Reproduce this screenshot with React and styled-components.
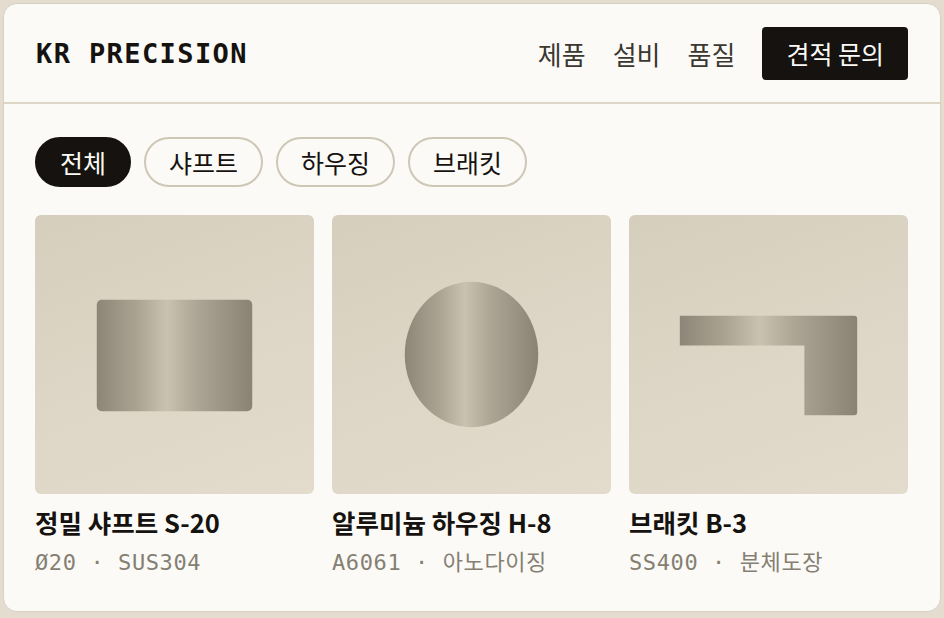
import React from "react";
import styled, { createGlobalStyle } from "styled-components";

const Global = createGlobalStyle`
  * { box-sizing: border-box; }
  html, body { margin: 0; padding: 0; }
  body {
    background: #e4ddcf;
    font-family: "Noto Sans CJK KR", "Noto Sans", sans-serif;
    color: #15120f;
  }
`;

const Frame = styled.div`
  margin: 3px;
  height: 609px;
  background: #fbfaf6;
  border: 1px solid #d8d1c2;
  border-radius: 14px;
  overflow: hidden;
  display: flex;
  flex-direction: column;
`;

const Header = styled.header`
  height: 100px;
  flex: none;
  display: flex;
  align-items: center;
  justify-content: space-between;
  padding: 0 32px 0 32px;
  border-bottom: 2px solid #ddd6c7;
`;

const Logo = styled.div`
  font-family: "DejaVu Sans Mono", "Liberation Mono", monospace;
  font-weight: 700;
  font-size: 27px;
  letter-spacing: 1.4px;
  color: #15120f;
`;

const Nav = styled.nav`
  display: flex;
  align-items: center;
`;

const NavLink = styled.a`
  font-size: 26px;
  color: #3b3731;
  margin-right: 27px;
  text-decoration: none;
`;

const QuoteButton = styled.button`
  height: 53px;
  padding: 0 24px;
  border: none;
  border-radius: 4px;
  background: #15120f;
  color: #fbfaf6;
  font-family: inherit;
  font-size: 25px;
`;

const Main = styled.main`
  padding: 33px 32px 0 31px;
`;

const Chips = styled.div`
  display: flex;
  gap: 13px;
  margin-bottom: 28px;
`;

const Chip = styled.button`
  height: 50px;
  padding: 0 23px;
  border-radius: 25px;
  border: 2px solid ${(p) => (p.$active ? "#15120f" : "#cec7b6")};
  background: ${(p) => (p.$active ? "#15120f" : "transparent")};
  color: ${(p) => (p.$active ? "#fbfaf6" : "#15120f")};
  font-family: inherit;
  font-size: 25px;
`;

const Grid = styled.div`
  display: grid;
  grid-template-columns: repeat(3, 1fr);
  gap: 18px;
`;

const Product = styled.article`
  display: flex;
  flex-direction: column;
`;

const Thumb = styled.div`
  aspect-ratio: 1 / 1;
  border-radius: 6px;
  background: linear-gradient(160deg, #d6cebd 0%, #ddd6c6 50%, #e3dccd 100%);
  overflow: hidden;
  svg { display: block; width: 100%; height: 100%; }
`;

const Title = styled.h3`
  margin: 13px 0 0;
  font-size: 25.5px;
  line-height: 30px;
  font-weight: 700;
  color: #15120f;
`;

const Spec = styled.p`
  margin: 11px 0 0;
  font-family: "DejaVu Sans Mono", "Noto Sans CJK KR", monospace;
  font-size: 22px;
  letter-spacing: 0.6px;
  line-height: 30px;
  color: #857f73;
  white-space: pre;
`;

function Metal({ id }) {
  return (
    <linearGradient id={id} x1="0" y1="0" x2="1" y2="0">
      <stop offset="0" stopColor="#8d8678" />
      <stop offset="0.25" stopColor="#aaa291" />
      <stop offset="0.45" stopColor="#cac2b0" />
      <stop offset="0.65" stopColor="#aca494" />
      <stop offset="1" stopColor="#8a8375" />
    </linearGradient>
  );
}

function ShaftShape() {
  return (
    <svg viewBox="0 0 280 280">
      <defs><Metal id="m-shaft" /></defs>
      <rect x="62" y="85" width="156" height="112" rx="5" fill="url(#m-shaft)" />
    </svg>
  );
}

function HousingShape() {
  return (
    <svg viewBox="0 0 280 280">
      <defs><Metal id="m-housing" /></defs>
      <ellipse cx="140" cy="140" rx="67" ry="73" fill="url(#m-housing)" />
    </svg>
  );
}

function BracketShape() {
  return (
    <svg viewBox="0 0 280 280">
      <defs><Metal id="m-bracket" /></defs>
      <path
        d="M51 101 H226 Q229 101 229 104 V198 Q229 201 226 201 H176 V131 H51 Z"
        fill="url(#m-bracket)"
      />
    </svg>
  );
}

const products = [
  { title: "정밀 샤프트 S-20", spec: "Ø20 · SUS304", Shape: ShaftShape },
  { title: "알루미늄 하우징 H-8", spec: "A6061 · 아노다이징", Shape: HousingShape },
  { title: "브래킷 B-3", spec: "SS400 · 분체도장", Shape: BracketShape },
];

const filters = ["전체", "샤프트", "하우징", "브래킷"];

export default function App() {
  return (
    <>
      <Global />
      <Frame>
        <Header>
          <Logo>KR PRECISION</Logo>
          <Nav>
            <NavLink>제품</NavLink>
            <NavLink>설비</NavLink>
            <NavLink>품질</NavLink>
            <QuoteButton>견적 문의</QuoteButton>
          </Nav>
        </Header>
        <Main>
          <Chips>
            {filters.map((f, i) => (
              <Chip key={f} $active={i === 0}>{f}</Chip>
            ))}
          </Chips>
          <Grid>
            {products.map(({ title, spec, Shape }) => (
              <Product key={title}>
                <Thumb><Shape /></Thumb>
                <Title>{title}</Title>
                <Spec>{spec}</Spec>
              </Product>
            ))}
          </Grid>
        </Main>
      </Frame>
    </>
  );
}
